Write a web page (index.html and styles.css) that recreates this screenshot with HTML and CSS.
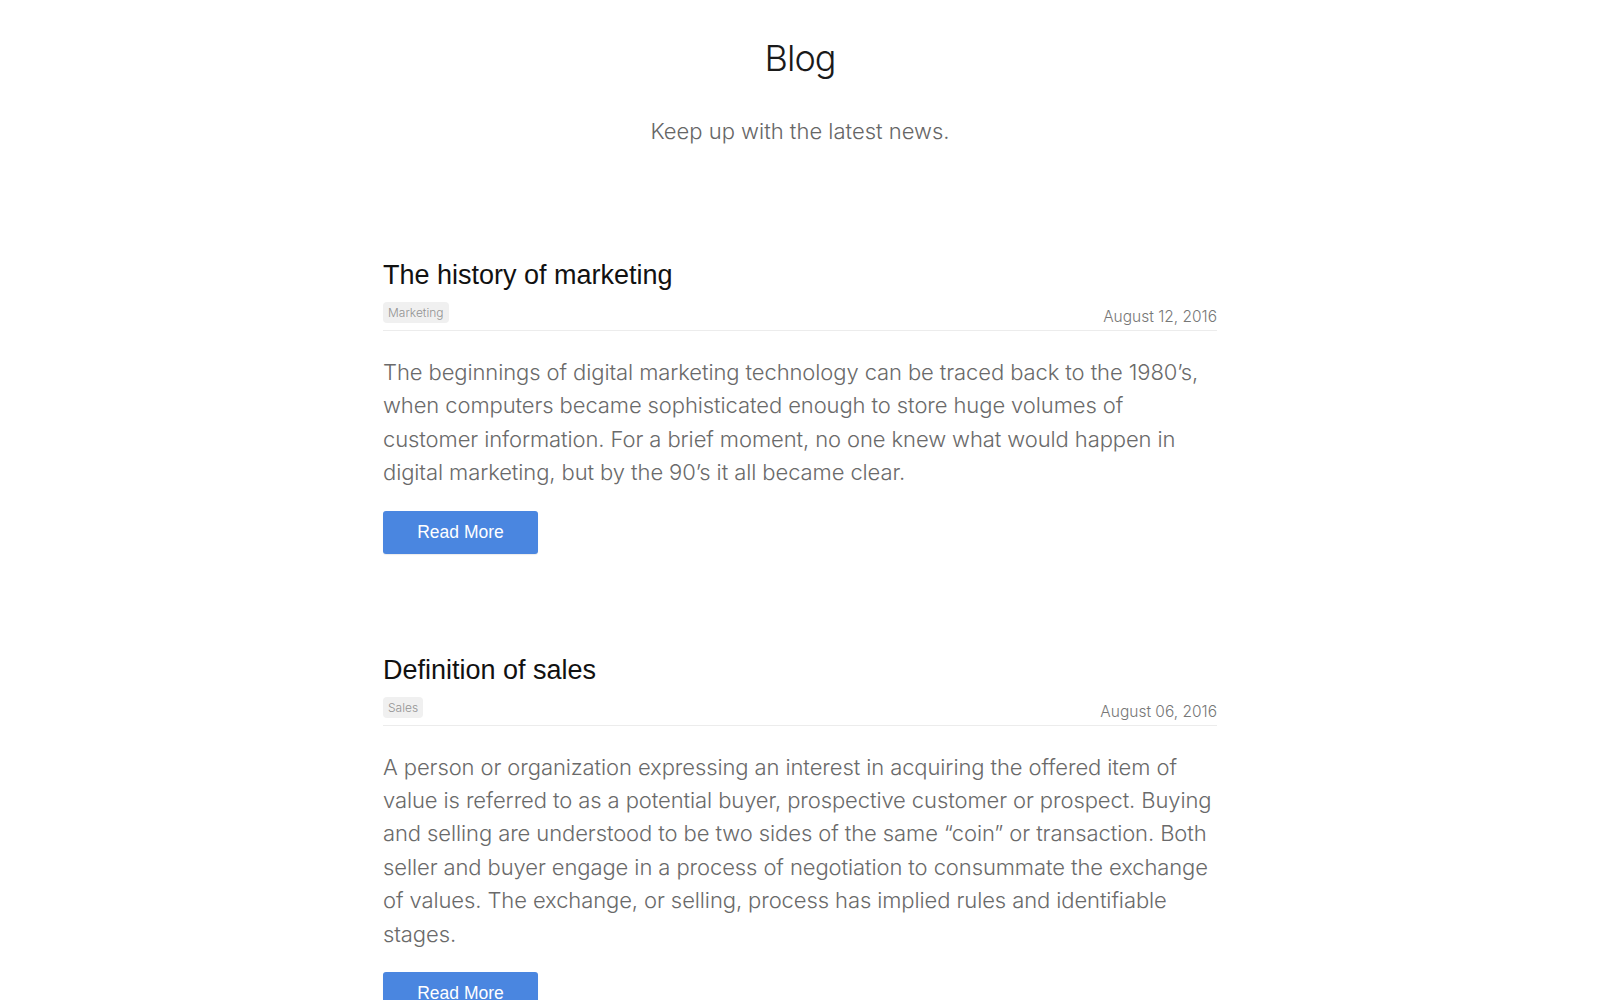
FILE: index.html
```html
<!DOCTYPE html>
<html lang="en">
<head>
<meta charset="utf-8">
<title>Blog</title>
<link rel="stylesheet" href="styles.css">
</head>
<body>
<div class="page">
  <header class="header">
    <h1 class="header-title">Blog</h1>
    <p class="header-sub">Keep up with the latest news.</p>
  </header>

  <article class="post">
    <h2 class="post-title">The history of marketing</h2>
    <div class="post-meta">
      <span class="post-tag">Marketing</span>
      <span class="post-date">August 12, 2016</span>
    </div>
    <p class="post-body">The beginnings of digital marketing technology can be traced back to the 1980’s, when computers became sophisticated enough to store huge volumes of customer information. For a brief moment, no one knew what would happen in digital marketing, but by the 90’s it all became clear.</p>
    <a class="btn" href="#">Read More</a>
  </article>

  <article class="post">
    <h2 class="post-title">Definition of sales</h2>
    <div class="post-meta">
      <span class="post-tag">Sales</span>
      <span class="post-date">August 06, 2016</span>
    </div>
    <p class="post-body">A person or organization expressing an interest in acquiring the offered item of value is referred to as a potential buyer, prospective customer or prospect. Buying and selling are understood to be two sides of the same “coin” or transaction. Both seller and buyer engage in a process of negotiation to consummate the exchange of values. The exchange, or selling, process has implied rules and identifiable stages.</p>
    <a class="btn" href="#">Read More</a>
  </article>
</div>
</body>
</html>
```

FILE: styles.css
```css
html, body {
  margin: 0;
  padding: 0;
  background: #fff;
}
body {
  font-family: "Inter", "Roboto", "Liberation Sans", sans-serif;
  font-weight: 300;
  color: #666;
}
.page {
  width: 834px;
  margin: 0 auto;
}
.header {
  text-align: center;
  padding-top: 35px;
}
.header-title {
  margin: 0;
  font-size: 36px;
  font-weight: 300;
  letter-spacing: -1px;
  line-height: 46px;
  color: #1a1a1a;
}
.header-sub {
  margin: 35px 0 0;
  font-size: 22px;
  font-weight: 300;
  line-height: 30px;
  color: #666;
}
.post {
  padding-top: 113px;
}
.post + .post {
  padding-top: 100px;
}
.post-title {
  margin: 0;
  font-family: "Liberation Sans", Arial, sans-serif;
  font-size: 27px;
  font-weight: 400;
  line-height: 32px;
  color: #111;
}
.post-meta {
  display: flex;
  justify-content: space-between;
  align-items: flex-end;
  margin-top: 11px;
  padding-bottom: 4px;
  border-bottom: 1px solid #ececec;
}
.post-tag {
  display: inline-block;
  margin-bottom: 3px;
  padding: 0 5px;
  height: 21px;
  line-height: 21px;
  font-size: 12px;
  color: #939393;
  background: #f0f0f0;
  border-radius: 4px;
}
.post-date {
  font-size: 15.5px;
  line-height: 18px;
  color: #777;
}
.post-body {
  margin: 25px 0 0;
  font-size: 22px;
  letter-spacing: -0.1px;
  line-height: 33.4px;
  color: #6a6a6a;
}
.btn {
  display: inline-block;
  margin-top: 21px;
  width: 155px;
  height: 43px;
  line-height: 43px;
  text-align: center;
  background: #4a86e0;
  color: #fff;
  font-family: "Liberation Sans", Arial, sans-serif;
  font-size: 17.5px;
  font-weight: 400;
  text-decoration: none;
  border-radius: 3px;
  box-shadow: 0 1px 1px rgba(0,0,0,0.08);
}
```
